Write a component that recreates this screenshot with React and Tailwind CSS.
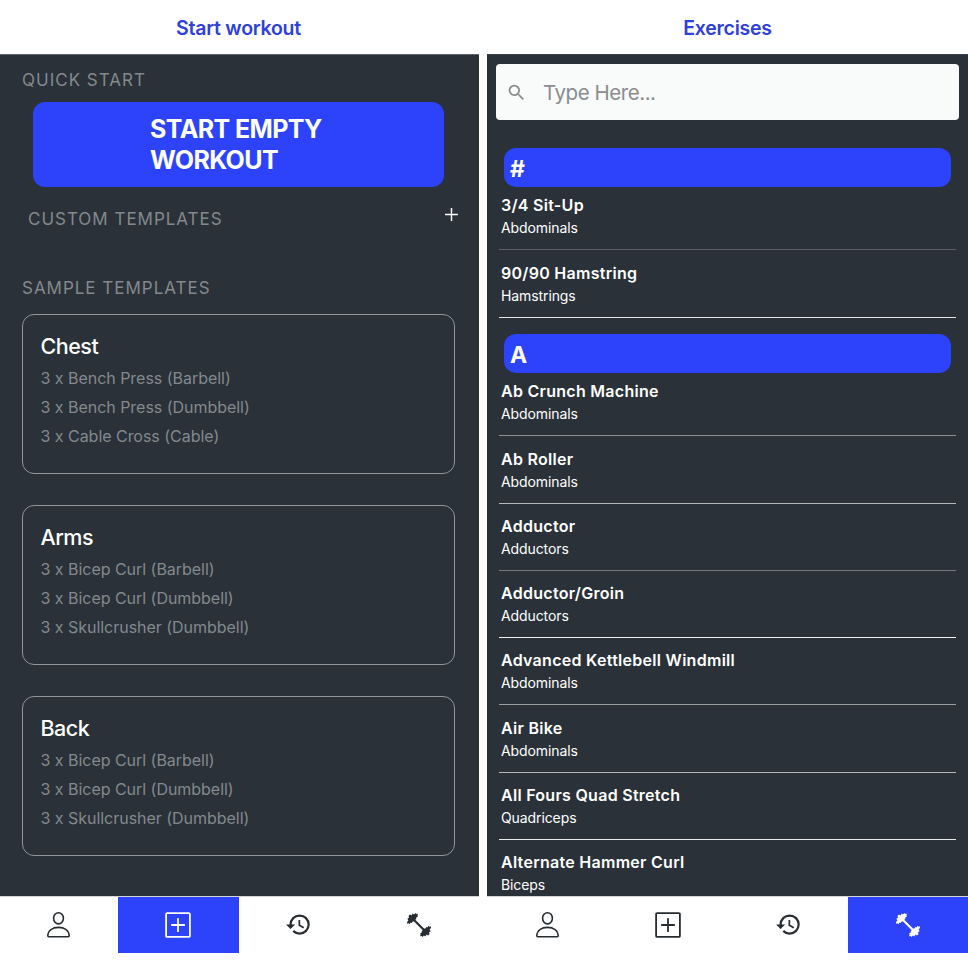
import { MdHistory, MdSearch } from "react-icons/md";

const TEMPLATES = [
  { name: "Chest", items: ["3 x Bench Press (Barbell)", "3 x Bench Press (Dumbbell)", "3 x Cable Cross (Cable)"] },
  { name: "Arms", items: ["3 x Bicep Curl (Barbell)", "3 x Bicep Curl (Dumbbell)", "3 x Skullcrusher (Dumbbell)"] },
  { name: "Back", items: ["3 x Bicep Curl (Barbell)", "3 x Bicep Curl (Dumbbell)", "3 x Skullcrusher (Dumbbell)"] },
];

const SECTIONS = [
  {
    letter: "#",
    rows: [
      ["3/4 Sit-Up", "Abdominals", "h-[63px] border-[#5b6166]"],
      ["90/90 Hamstring", "Hamstrings", "h-[68px] border-[#e2e4e5]"],
    ],
  },
  {
    letter: "A",
    rows: [
      ["Ab Crunch Machine", "Abdominals", "h-[63px] border-[#8b9093]"],
      ["Ab Roller", "Abdominals", "h-[68px] border-[#b5b8ba]"],
      ["Adductor", "Adductors", "h-[67px] border-[#74797d]"],
      ["Adductor/Groin", "Adductors", "h-[67px] border-[#f0f1f2]"],
      ["Advanced Kettlebell Windmill", "Abdominals", "h-[67px] border-[#9a9ea1]"],
      ["Air Bike", "Abdominals", "h-[68px] border-[#b5b8ba]"],
      ["All Fours Quad Stretch", "Quadriceps", "h-[67px] border-[#e8eaeb]"],
      ["Alternate Hammer Curl", "Biceps", "h-[67px] border-transparent"],
    ],
  },
];

function PersonIcon() {
  return (
    <svg width="26" height="28" viewBox="0 0 26 28" fill="none" stroke="currentColor" strokeWidth="1.6" strokeLinejoin="round">
      <ellipse cx="12.5" cy="7.3" rx="4.9" ry="5.6" />
      <path d="M1.8 24.8C2.1 19.3 6.5 16.4 12.5 16.4S22.9 19.3 23.2 24.8q0 .9-.9.9H2.7q-.9 0-.9-.9Z" />
    </svg>
  );
}

function PlusBoxIcon() {
  return (
    <svg width="26" height="26" viewBox="0 0 26 26" fill="none" stroke="currentColor" strokeWidth="1.8">
      <rect x="1.1" y="1.1" width="23.8" height="23.8" rx="1" />
      <path d="M13 6.8v12.4M6.8 13h12.4" strokeLinecap="round" />
    </svg>
  );
}

function HistoryIcon() {
  return <MdHistory size={27} className="mb-[2px]" />;
}

const PLATES =
  "M1 10.2 2.4 8.2 1.3 6.8 3.2 5.6 2.4 3.9 4 2.4 5.4 3.4 6.6 1.4 8 2.5 9.6.9 10.4 2 12 1.7 11.4 3.6 12 4.4 10.2 5.6 10.3 7 8.6 8.2 8.4 9.2 6.6 9.4 5.8 11 4.6 10.6 3.4 12.2 2.6 11.2 1.2 11.8Z";

function DumbbellIcon() {
  return (
    <svg width="26" height="26" viewBox="0 0 26 26" fill="currentColor">
      <path d="M7 7l12 12" stroke="currentColor" strokeWidth="2.1" />
      <path d={PLATES} />
      <path d={PLATES} transform="rotate(180 13 13)" />
    </svg>
  );
}

const ICONS = [PersonIcon, PlusBoxIcon, HistoryIcon, DumbbellIcon];

function TabBar({ active, columns }) {
  return (
    <nav className={"grid h-[57px] shrink-0 border-t border-[#d3d5d6] text-[#272c30] " + columns}>
      {ICONS.map((Icon, i) => (
        <div
          key={i}
          className={"flex items-center justify-center " + (i === active ? "bg-[#2d43fb] text-white" : "")}
        >
          <Icon />
        </div>
      ))}
    </nav>
  );
}

function Title({ children, className }) {
  return (
    <header className={"flex h-[54px] shrink-0 items-center justify-center pt-[3px] text-[19.5px] font-semibold tracking-[-0.25px] text-[#2f40dc] " + className}>
      {children}
    </header>
  );
}

function StartWorkout() {
  return (
    <section className="flex h-[953px] w-[479px] flex-col">
      <Title className="pr-[2px]">Start workout</Title>
      <main className="min-h-0 flex-1 overflow-hidden border-t border-[#5d6367] bg-[#2a3138] px-[22px] text-[#84898d]">
        <h2 className="mt-[13px] text-[17px] leading-[25px] tracking-[1px]">QUICK START</h2>
        <button className="mt-[9px] ml-[11px] flex h-[85px] w-[411px] items-center rounded-[12px] bg-[#2d43fb] pl-[117px] text-left text-[25px] leading-[31px] font-bold tracking-[-0.6px] text-white">
          <span className="w-[190px]">START EMPTY WORKOUT</span>
        </button>
        <div className="mt-[20px] flex h-[24px] items-center justify-between pl-[6px]">
          <h2 className="text-[17px] leading-[24px] tracking-[0.98px]">CUSTOM TEMPLATES</h2>
          <svg className="mt-[-9px] mr-[-2px]" width="15" height="15" viewBox="0 0 15 15" stroke="#fff" strokeWidth="1.5">
            <path d="M7.5 1v13M1 7.5h13" />
          </svg>
        </div>
        <h2 className="mt-[45px] text-[17px] leading-[24px] tracking-[0.98px]">SAMPLE TEMPLATES</h2>
        <div className="mt-[14px] flex flex-col gap-[31px]">
          {TEMPLATES.map((t) => (
            <article key={t.name} className="h-[160px] w-[433px] rounded-[12px] border border-[#8f9599] pt-[16px] pl-[17.5px]">
              <h3 className="text-[21.5px] leading-[30px] font-medium tracking-[-0.5px] text-white">{t.name}</h3>
              <ul className="mt-[3px] text-[16px] leading-[29px] tracking-[-0.03px]">
                {t.items.map((item) => (
                  <li key={item}>{item}</li>
                ))}
              </ul>
            </article>
          ))}
        </div>
      </main>
      <TabBar active={1} columns="grid-cols-[118px_120.5px_120.5px_120px]" />
    </section>
  );
}

function Exercises() {
  return (
    <section className="flex h-[953px] w-[481px] flex-col">
      <Title className="">Exercises</Title>
      <main className="min-h-0 flex-1 overflow-hidden border-t border-[#3d4449] bg-[#2a3138] pl-[9px]">
        <div className="mt-[9px] flex h-[56px] w-[463px] items-center rounded-[4px] bg-[#f9fafa] pl-[10px] text-[#8a8c8f]">
          <MdSearch size={21} />
          <span className="ml-[16px] pt-[2px] text-[20.5px] tracking-[-0.45px]">Type Here...</span>
        </div>
        <div className="mt-[28px] flex flex-col gap-[16px]">
          {SECTIONS.map((s) => (
            <div key={s.letter}>
              <h2 className="ml-[8px] flex h-[39px] w-[447px] items-center rounded-[12px] bg-[#2d43fb] pt-[3px] pl-[6px] text-[23px] font-bold text-white">
                {s.letter}
              </h2>
              <ul className="ml-[3px] w-[457px]">
                {s.rows.map(([name, muscle, style]) => (
                  <li key={name} className={"flex flex-col justify-end border-b pb-[10px] pl-[2px] text-white " + style}>
                    <span className="text-[16px] leading-[22px] font-semibold tracking-[0.28px]">{name}</span>
                    <span className="mt-[1px] text-[14px] leading-[22px] tracking-[-0.1px]">{muscle}</span>
                  </li>
                ))}
              </ul>
            </div>
          ))}
        </div>
      </main>
      <TabBar active={3} columns="grid-cols-[121px_120px_120px_120px]" />
    </section>
  );
}

export default function App() {
  return (
    <div className="flex h-[968px] w-[968px] gap-[8px] overflow-hidden bg-white font-['Inter',sans-serif]">
      <StartWorkout />
      <Exercises />
    </div>
  );
}
